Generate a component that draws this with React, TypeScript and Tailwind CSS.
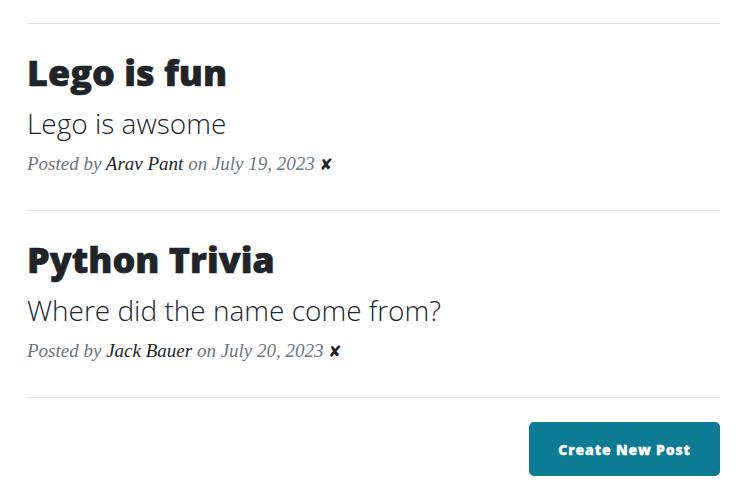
const posts = [
  { title: 'Lego is fun', subtitle: 'Lego is awsome', author: 'Arav Pant', date: 'July 19, 2023' },
  { title: 'Python Trivia', subtitle: 'Where did the name come from?', author: 'Jack Bauer', date: 'July 20, 2023' },
]

function PostPreview({ post }: { post: (typeof posts)[number] }) {
  return (
    <div className="flex flex-col">
      <a href="#" className="text-[#212529]">
        <h2 className="text-[36px] leading-[43px] font-extrabold font-['Open_Sans',sans-serif] [-webkit-text-stroke:0.6px_#212529]">
          {post.title}
        </h2>
        <h3 className="mt-[12px] text-[28px] leading-[34px] font-light font-['Open_Sans',sans-serif]">{post.subtitle}</h3>
      </a>
      <p className="mt-[12px] h-[24px] text-[19px] leading-[24px] italic text-[#6c757d] font-['Liberation_Serif',serif]">
        Posted by <a href="#" className="text-[#212529]">{post.author}</a> on {post.date}{' '}
        <span className="not-italic text-[16px] leading-none text-[#212529] font-['DejaVu_Sans',sans-serif]">✘</span>
      </p>
    </div>
  )
}

export default function App() {
  return (
    <div className="bg-white min-h-[489px] pt-[23px] pl-[27px]">
      <div className="w-[693px] flex flex-col">
        <hr className="border-t border-[#dee2e6]" />
        {posts.map((post) => (
          <div key={post.title} className="flex flex-col">
            <div className="pt-[27px] pb-[34px]">
              <PostPreview post={post} />
            </div>
            <hr className="border-t border-[#dee2e6]" />
          </div>
        ))}
        <div className="flex justify-end pt-[24px]">
          <button className="w-[191px] h-[54px] rounded-[5px] bg-[#0e7b95] text-white text-[14px] font-extrabold tracking-[0.06em] font-['Open_Sans',sans-serif] [-webkit-text-stroke:0.3px_#ffffff]">
            Create New Post
          </button>
        </div>
      </div>
    </div>
  )
}
